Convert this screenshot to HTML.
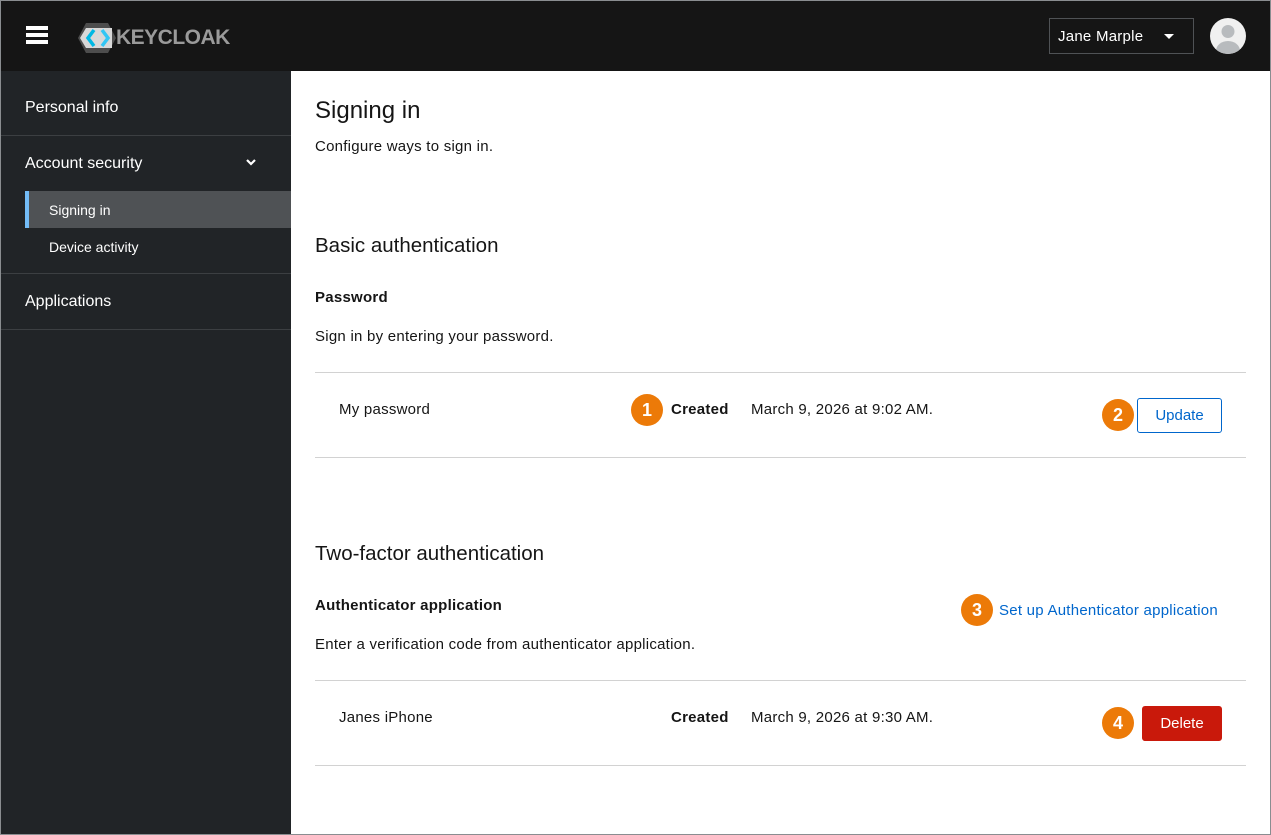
<!DOCTYPE html>
<html><head><style>
*{margin:0;padding:0;box-sizing:border-box}
body{width:1271px;height:835px;overflow:hidden;font-family:"Liberation Sans",sans-serif;background:#fff;position:relative;color:#151515}
.frame{position:absolute;left:0;top:0;width:1271px;height:835px;border:1px solid #8a8d90;pointer-events:none;z-index:9}
.hdr{position:absolute;left:0;top:0;width:1271px;height:71px;background:#151515}
.side{position:absolute;left:0;top:71px;width:291px;height:764px;background:#212427;color:#fff}
.a{position:absolute;white-space:nowrap}
.t{font-size:15px;letter-spacing:0.25px}
.sep{position:absolute;left:0;width:291px;height:1px;background:#3c3f42}
.hl{position:absolute;left:315px;width:931px;height:1px;background:#d2d2d2}
.b{position:absolute;width:32px;height:32px;border-radius:50%;background:#ec7a08;color:#fff;font-weight:bold;font-size:18px;text-align:center;line-height:32px}
</style></head><body>
<div class="hdr">
 <div class="a" style="left:26px;top:26px;width:22px;height:4px;background:#fff;box-shadow:0 7px 0 #fff,0 14px 0 #fff"></div>
 <svg class="a" style="left:78px;top:23px" width="40" height="30" viewBox="0 0 40 30">
  <polygon points="8,0 30,0 38,15 30,30 8,30 0,15" fill="#4d4d4d"/>
  <polygon points="2,15 8,5 34,5 34,25 8,25" fill="#d8d8d8"/>
  <polyline points="16,7 10,15 16,23" fill="none" stroke="#00b8e3" stroke-width="3.5"/>
  <polyline points="24,7 30,15 24,23" fill="none" stroke="#33c6f4" stroke-width="3.5"/>
 </svg>
 <div class="a" style="left:116px;top:26px;font-size:21px;font-weight:bold;color:#9a9a9a;letter-spacing:-0.5px">KEYCLOAK</div>
 <div class="a" style="left:1049px;top:18px;width:145px;height:36px;border:1px solid #4f5255"></div>
 <div class="a t" style="left:1058px;top:28px;color:#fff">Jane Marple</div>
 <div class="a" style="left:1164px;top:34px;width:0;height:0;border-left:5px solid transparent;border-right:5px solid transparent;border-top:5px solid #fff"></div>
 <svg class="a" style="left:1210px;top:18px" width="36" height="36" viewBox="0 0 36 36"><defs><clipPath id="c"><circle cx="18" cy="18" r="18"/></clipPath></defs><circle cx="18" cy="18" r="18" fill="#f0f0f0"/><g clip-path="url(#c)" fill="#b8bbbe"><circle cx="18" cy="13.5" r="6.5"/><ellipse cx="18" cy="33" rx="12" ry="10"/></g></svg>
</div>
<div class="side">
 <div class="a" style="left:25px;top:28px;font-size:16px">Personal info</div>
 <div class="sep" style="top:64px"></div>
 <div class="a" style="left:25px;top:84px;font-size:16px">Account security</div>
 <svg class="a" style="left:246px;top:88px" width="10" height="7" viewBox="0 0 10 7"><polyline points="1,1 5,5 9,1" fill="none" stroke="#fff" stroke-width="2.2"/></svg>
 <div class="a" style="left:25px;top:120px;width:266px;height:37px;background:#4f5255;border-left:4px solid #73bcf7"></div>
 <div class="a" style="left:49px;top:131px;font-size:14px">Signing in</div>
 <div class="a" style="left:49px;top:168px;font-size:14px">Device activity</div>
 <div class="sep" style="top:202px"></div>
 <div class="a" style="left:25px;top:222px;font-size:16px">Applications</div>
 <div class="sep" style="top:258px"></div>
</div>
<div class="a" style="left:315px;top:97px;font-size:24px">Signing in</div>
<div class="a t" style="left:315px;top:138px">Configure ways to sign in.</div>
<div class="a" style="left:315px;top:234px;font-size:20.5px">Basic authentication</div>
<div class="a t" style="left:315px;top:289px;font-weight:bold">Password</div>
<div class="a t" style="left:315px;top:328px">Sign in by entering your password.</div>
<div class="hl" style="top:372px"></div>
<div class="a t" style="left:339px;top:401px">My password</div>
<div class="b" style="left:631px;top:394px">1</div>
<div class="a t" style="left:671px;top:401px;font-weight:bold">Created</div>
<div class="a t" style="left:751px;top:401px">March 9, 2026 at 9:02 AM.</div>
<div class="b" style="left:1102px;top:399px">2</div>
<div class="a t" style="left:1137px;top:398px;width:85px;height:35px;border:1px solid #06c;border-radius:3px;color:#06c;text-align:center;line-height:33px;letter-spacing:0">Update</div>
<div class="hl" style="top:457px"></div>
<div class="a" style="left:315px;top:542px;font-size:20.5px">Two-factor authentication</div>
<div class="a t" style="left:315px;top:597px;font-weight:bold">Authenticator application</div>
<div class="b" style="left:961px;top:594px">3</div>
<div class="a t" style="left:999px;top:602px;color:#06c">Set up Authenticator application</div>
<div class="a t" style="left:315px;top:636px">Enter a verification code from authenticator application.</div>
<div class="hl" style="top:680px"></div>
<div class="a t" style="left:339px;top:709px">Janes iPhone</div>
<div class="a t" style="left:671px;top:709px;font-weight:bold">Created</div>
<div class="a t" style="left:751px;top:709px">March 9, 2026 at 9:30 AM.</div>
<div class="b" style="left:1102px;top:707px">4</div>
<div class="a t" style="left:1142px;top:706px;width:80px;height:35px;background:#c9190b;border-radius:3px;color:#fff;text-align:center;line-height:35px;letter-spacing:0">Delete</div>
<div class="hl" style="top:765px"></div>
<div class="frame"></div>
</body></html>
